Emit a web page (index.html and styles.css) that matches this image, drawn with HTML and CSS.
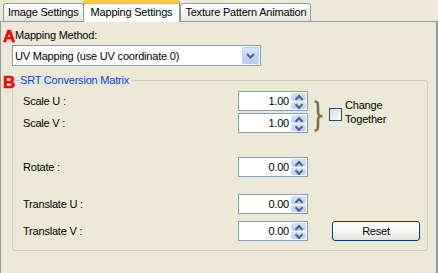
FILE: index.html
```html
<!DOCTYPE html>
<html lang="en">
<head>
    <meta charset="UTF-8">
    <title>Mapping Settings</title>
    <link rel="stylesheet" href="styles.css">
</head>
<body>
    <div class="tabs">
        <div class="tab">Image Settings</div>
        <div class="tab active">Mapping Settings</div>
        <div class="tab">Texture Pattern Animation</div>
    </div>

    <div class="panel">
        <div class="method-label"><span class="marker">A</span>Mapping Method:</div>
        <div class="select">
            <span class="select-text">UV Mapping (use UV coordinate 0)</span>
            <span class="select-btn">
                <svg width="9" height="6" viewBox="0 0 9 6"><path d="M1 1 L4.5 4.5 L8 1" fill="none" stroke="#4d6185" stroke-width="2"/></svg>
            </span>
        </div>

        <fieldset class="group">
            <span class="marker marker-b">B</span>
            <legend>SRT Conversion Matrix</legend>

            <div class="scale-block">
                <div class="scale-rows">
                    <div class="row">
                        <span class="label">Scale U :</span>
                        <div class="spin"><span class="spin-value">1.00</span><span class="spin-btn"><i class="up"></i><i class="down"></i></span></div>
                    </div>
                    <div class="row">
                        <span class="label">Scale V :</span>
                        <div class="spin"><span class="spin-value">1.00</span><span class="spin-btn"><i class="up"></i><i class="down"></i></span></div>
                    </div>
                </div>
                <svg class="brace" width="11" height="32" viewBox="0 0 11 32">
                    <path d="M1.5 1.5 C5 1.5 5 3 5 7 L5 12 C5 15 6 16 9.5 16 C6 16 5 17 5 20 L5 25 C5 29 5 30.5 1.5 30.5" fill="none" stroke="#7d6f45" stroke-width="2.5"/>
                </svg>
                <label class="check">
                    <span class="box"></span>
                    <span class="check-text">Change<br>Together</span>
                </label>
            </div>

            <div class="row row-rotate">
                <span class="label">Rotate :</span>
                <div class="spin"><span class="spin-value">0.00</span><span class="spin-btn"><i class="up"></i><i class="down"></i></span></div>
            </div>
            <div class="row row-tu">
                <span class="label">Translate U :</span>
                <div class="spin"><span class="spin-value">0.00</span><span class="spin-btn"><i class="up"></i><i class="down"></i></span></div>
            </div>
            <div class="row row-tv">
                <span class="label">Translate V :</span>
                <div class="spin"><span class="spin-value">0.00</span><span class="spin-btn"><i class="up"></i><i class="down"></i></span></div>
                <button class="reset">Reset</button>
            </div>
        </fieldset>
    </div>
</body>
</html>
```

FILE: styles.css
```css
* {
    margin: 0;
    padding: 0;
    box-sizing: border-box;
}

body {
    background: #ece9d8;
    font-family: 'Liberation Sans', Arial, sans-serif;
    font-size: 11px;
    letter-spacing: -0.2px;
    color: #000;
    width: 438px;
    height: 273px;
    overflow: hidden;
}

.tabs {
    display: flex;
    align-items: flex-end;
    height: 21px;
    padding-left: 3px;
    position: relative;
    z-index: 1;
}

.tab {
    height: 18px;
    line-height: 17px;
    padding: 0 4px;
    border: 1px solid #919b9c;
    border-bottom: none;
    border-radius: 3px 3px 0 0;
    background: linear-gradient(#ffffff, #f3f3ef 60%, #e6e5de);
    margin-right: -1px;
}

.tab.active {
    height: 22px;
    margin-bottom: -1px;
    padding: 0 7px;
    line-height: 18px;
    background: #fcfcfe;
    border-top: 3px solid #ffc83c;
    box-shadow: inset 0 1px 0 #f7b93a;
    border-color: #e68b2c #919b9c #919b9c;
    border-top-color: #ffc83c;
    position: relative;
    z-index: 2;
    margin-right: 0;
}

.panel {
    height: 252px;
    border: 1px solid #919b9c;
    border-right: 2px solid #919b9c;
    border-bottom: none;
    background: #ece9d8;
    padding-top: 7px;
}

.method-label {
    height: 13px;
    line-height: 13px;
    padding-left: 2px;
}

.marker {
    color: #f00;
    font-weight: 900;
    font-size: 17px;
    line-height: 13px;
    letter-spacing: -1px;
    -webkit-text-stroke: 0.6px #f00;
    display: inline-block;
    width: 12px;
    vertical-align: -3px;
}

.select {
    display: flex;
    align-items: center;
    width: 249px;
    height: 21px;
    margin: 3px 0 0 11px;
    border: 1px solid #7f9db9;
    background: #fff;
    padding: 1px;
}

.select-text {
    flex: 1;
    padding-left: 1px;
}

.select-btn {
    width: 17px;
    height: 17px;
    border-radius: 2px;
    background: linear-gradient(#d6e2fd, #b8cbf8);
    border: 1px solid #b9cdf9;
    display: flex;
    align-items: center;
    justify-content: center;
}

.group {
    position: relative;
    width: 416px;
    height: 177px;
    margin: 8px 0 0 11px;
    border: 1px solid #d0d0bf;
    border-radius: 3px;
    padding: 4px 0 0 10px;
}

.group legend {
    color: #0046d5;
    line-height: 13px;
    margin-left: -4px;
    padding: 0 2px 0 1px;
}

.marker-b {
    position: absolute;
    left: -10px;
    top: -11px;
    background: #ece9d8;
}

.row {
    display: flex;
    align-items: center;
    height: 20px;
}

.label {
    width: 215px;
}

.scale-block {
    display: flex;
    align-items: center;
}

.scale-rows {
    display: flex;
    flex-direction: column;
    gap: 2px;
}

.spin {
    width: 70px;
    height: 20px;
    border: 1px solid #7f9db9;
    background: #fff;
    display: flex;
    align-items: center;
    padding: 1px;
}

.spin-value {
    flex: 1;
    text-align: right;
    padding-right: 2px;
}

.spin-btn {
    width: 15px;
    height: 16px;
    display: flex;
    flex-direction: column;
    gap: 1px;
}

.spin-btn i {
    flex: 1;
    border-radius: 2px;
    background: linear-gradient(#d4e1fd, #bccdf8);
    position: relative;
}

.spin-btn i::after {
    content: "";
    position: absolute;
    left: 5px;
    width: 4px;
    height: 4px;
    border-left: 2px solid #4d6185;
    border-top: 2px solid #4d6185;
}

.spin-btn .up::after {
    top: 3px;
    transform: rotate(45deg);
}

.spin-btn .down::after {
    top: 0;
    transform: rotate(225deg);
}

.brace {
    margin: 8px 0 0 5px;
}

.check {
    display: flex;
    align-items: center;
    margin-left: 5px;
}

.box {
    width: 13px;
    height: 13px;
    border: 1px solid #1c5180;
    background: linear-gradient(135deg, #dcdcd7, #fcfcfb);
    margin-top: 5px;
}

.check-text {
    line-height: 14px;
    margin-left: 3px;
}

.row-rotate {
    margin-top: 24px;
}

.row-tu {
    margin-top: 17px;
}

.row-tv {
    margin-top: 7px;
}

.reset {
    width: 88px;
    height: 20px;
    margin-left: 24px;
    border: 1px solid #003c74;
    border-radius: 3px;
    background: linear-gradient(#ffffff, #f4f4f0 60%, #e3e3db);
    font-family: 'Liberation Sans', Arial, sans-serif;
    font-size: 11px;
    letter-spacing: -0.2px;
    color: #000;
}
```
